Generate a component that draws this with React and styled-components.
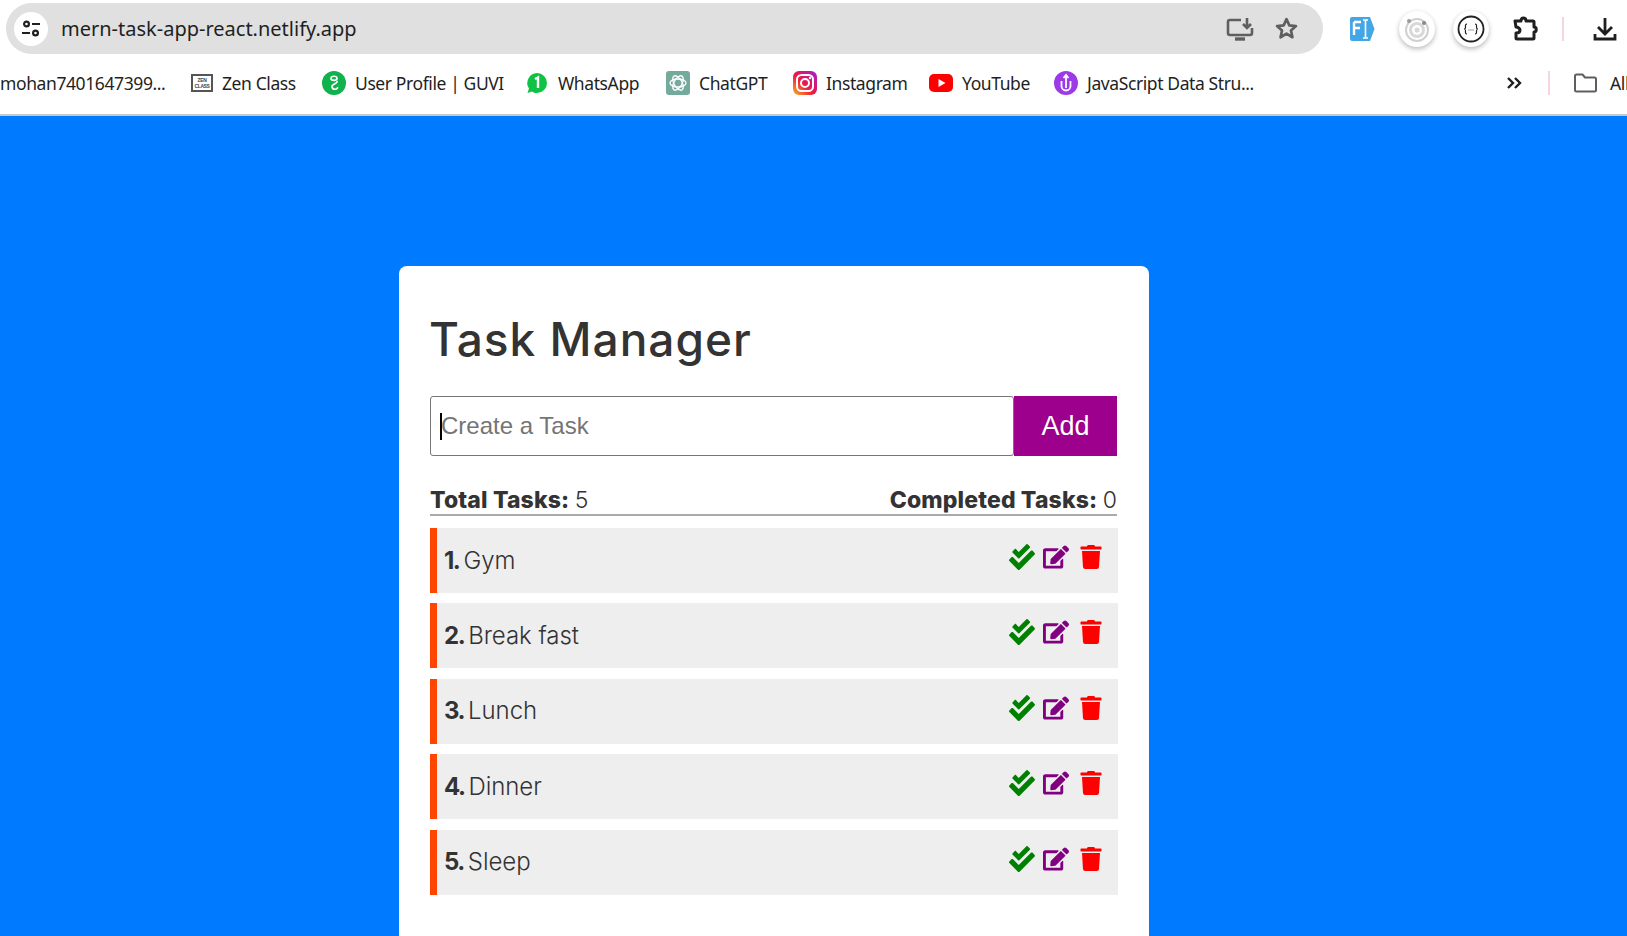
import React from "react";
import styled, { createGlobalStyle } from "styled-components";
import { FaCheckDouble, FaEdit, FaTrash } from "react-icons/fa";

const Global = createGlobalStyle`
  html, body { margin: 0; padding: 0; height: 936px; overflow: hidden; background: #007bff; }
  * { box-sizing: border-box; }
  svg { flex-shrink: 0; }
`;
const Page = styled.div`width: 1627px; height: 936px; overflow: hidden; display: flex; flex-direction: column;`;
const BrowserChrome = styled.header`
  height: 116px; flex: none; background: #fff; border-bottom: 2px solid #c8c8c8;
  display: flex; flex-direction: column; font-family: "Noto Sans", "Open Sans", sans-serif; color: #1f1f1f;
`;
const TopRow = styled.div`height: 57px; padding: 3px 0 0 6px; display: flex; align-items: flex-start;`;
const Omnibox = styled.div`
  width: 1317px; height: 51px; border-radius: 26px; background: #e0e0e0; display: flex; align-items: center;
  padding: 0 24px 0 8px;
`;
const SiteButton = styled.div`width: 34px; height: 34px; border-radius: 50%; background: #fff; display: flex; align-items: center; justify-content: center; flex: none;`;
const Url = styled.span`margin-left: 13px; font-size: 20px; flex: 1;`;
const BoxIcons = styled.div`display: flex; align-items: center; gap: 20px;`;
const Extensions = styled.div`display: flex; align-items: center; margin-left: 26px; height: 51px;`;
const ExtCircle = styled.div`
  width: 36px; height: 36px; border-radius: 50%; background: #fff; box-shadow: 0 2px 5px rgba(0,0,0,.28);
  display: flex; align-items: center; justify-content: center; margin-left: ${p => p.$gap}px;
`;
const ExtPlain = styled.div`display: flex; margin-left: ${p => p.$gap}px; align-items: center;`;
const Separator = styled.div`width: 2px; height: 24px; background: #f6d5e2; margin-left: ${p => p.$gap}px; flex: none;`;
const Bookmarks = styled.nav`height: 57px; display: flex; align-items: center; padding-bottom: 5px; font-size: 17.5px; white-space: nowrap; overflow: hidden;`;
const Bookmark = styled.div`display: flex; align-items: center; gap: 9px; margin-left: ${p => p.$gap}px; letter-spacing: -.4px; flex: none; width: ${p => p.$w}px;`;
const Main = styled.main`flex: 1; background: #007bff; display: flex; padding: 150px 0 0 399px; min-height: 0;`;
const Card = styled.section`
  width: 750px; height: 720px; flex: none; background: #fff; border-radius: 8px; padding: 30px 31px 0;
  font-family: Inter, "Noto Sans", sans-serif; color: #333;
`;
const Title = styled.h1`margin: 13px 0 0 -1px; font-size: 46px; line-height: 60px; font-weight: 500; letter-spacing: 1px;`;
const TaskForm = styled.div`display: flex; margin-top: 27px; width: 687px;`;
const TaskInput = styled.div`
  flex: 1; height: 60px; border: 1px solid #767676; border-radius: 3px; display: flex; align-items: center; padding-left: 9px;
  font-family: "Liberation Sans", Arial, sans-serif; font-size: 24px; color: #757575;
`;
const Caret = styled.span`width: 2px; height: 27px; background: #000; margin-right: -1px; flex: none;`;
const AddButton = styled.button`
  width: 103px; height: 60px; border: 0; background: #9c008c; color: #fff; font: 27px "Liberation Sans", Arial, sans-serif; padding: 0;
`;
const Stats = styled.div`
  display: flex; justify-content: space-between; width: 687px; margin-top: 28px; height: 32px; border-bottom: 2px solid #aaa;
  font-size: 23px; line-height: 32px; color: #333; font-weight: 300; word-spacing: -1px;
`;
const StatLabel = styled.b`font-weight: 800; letter-spacing: .15px; word-spacing: 0;`;
const TaskList = styled.ul`list-style: none; margin: 12px 0 0; padding: 0; width: 688px;`;
const TaskRow = styled.li`
  height: 65px; margin-bottom: 10.4px; background: #eee; border-left: 7px solid #ff4500;
  display: flex; align-items: center; padding: 0 16px 0 7px; font-size: 24px; font-weight: 300;
`;
const TaskName = styled.p`margin: -1px 0 0; flex: 1; letter-spacing: -.05px;`;
const TaskNo = styled.b`font-weight: 700; margin-right: 4px; letter-spacing: -1.5px;`;
const Actions = styled.div`display: flex; align-items: center; margin-top: -7px; font-size: 24px;`;
const Check = styled(FaCheckDouble)`color: #008000; width: 26px; height: 26px;`;
const Edit = styled(FaEdit)`color: #800080; margin-left: 8px; width: 26px; height: 24px;`;
const Trash = styled(FaTrash)`color: #ff0000; margin-left: 11px; width: 22px; height: 24px;`;

const tasks = ["Gym", "Break fast", "Lunch", "Dinner", "Sleep"];

const Tune = () => (
  <svg width="20" height="20" viewBox="0 0 20 20" fill="none" stroke="#1f1f1f" strokeWidth="2.2">
    <circle cx="5.5" cy="5" r="2.4" /><path d="M11 5h8M1 14h8" /><circle cx="14.5" cy="14" r="2.4" />
  </svg>
);
const Install = () => (
  <svg width="28" height="24" viewBox="0 0 28 24" fill="none" stroke="#5f5f5f" strokeWidth="2.6">
    <path d="M15 3H4a2 2 0 0 0-2 2v11a2 2 0 0 0 2 2h20a2 2 0 0 0 2-2v-5" />
    <path d="M21 1v9M17 7l4 4 4-4" /><path d="M9 22h10" strokeWidth="3.4" />
  </svg>
);
const Star = () => (
  <svg width="25" height="25" viewBox="0 0 24 24" fill="none" stroke="#5f5f5f" strokeWidth="2.6" strokeLinejoin="round">
    <path d="M12 3l2.7 6 6.4.7-4.8 4.3 1.4 6.4L12 17l-5.7 3.4 1.4-6.400-4.800-4.300 6.400-.7z" />
  </svg>
);
const FiLogo = () => (
  <svg width="25" height="26" viewBox="0 0 25 26">
    <path d="M2 1h18l4.500 12L20 25H2a2 2 0 0 1-2-2V3a2 2 0 0 1 2-2z" fill="#45a6e5" />
    <path d="M4 6h7M4 6v13M4 12h6" stroke="#fff" strokeWidth="2.400" fill="none" />
    <path d="M13 4h5M15.500 4v18M13 22h5" stroke="#fff" strokeWidth="1.600" fill="none" />
  </svg>
);
const TargetLogo = () => (
  <svg width="30" height="30" viewBox="0 0 30 30" fill="none">
    <circle cx="15" cy="16" r="11" stroke="#d0d0d0" strokeWidth="2" />
    <circle cx="15" cy="16" r="6.500" stroke="#d8d8d8" strokeWidth="3" />
    <circle cx="15" cy="16" r="2.500" fill="#d8d8d8" />
    <circle cx="7" cy="7" r="2" fill="#9a9a9a" /><circle cx="22" cy="9" r="2" fill="#888" />
  </svg>
);
const BracesLogo = () => (
  <svg width="28" height="28" viewBox="0 0 28 28" fill="none">
    <circle cx="14" cy="14" r="12.500" stroke="#222" strokeWidth="1.800" />
    <path d="M10 9c-2 0-1.500 2-1.500 3.500S8 14 7 14c1 0 1.500 0 1.500 1.500S8 19 10 19M18 9c2 0 1.500 2 1.500 3.500S20 14 21 14c-1 0-1.500 0-1.500 1.500S20 19 18 19" stroke="#222" strokeWidth="1.200" />
    <path d="M11.500 15h1M13.500 15h1M15.500 15h1" stroke="#444" />
  </svg>
);
const Puzzle = () => (
  <svg width="26" height="26" viewBox="0 0 26 26" fill="none" stroke="#1f1f1f" strokeWidth="3" strokeLinejoin="round">
    <path d="M3 5h6c0-4 5-4 5 0h7a1 1 0 0 1 1 1v5c3 0 3 5 0 5v6a1 1 0 0 1-1 1H5c-1 0-1-.5-1-1v-5c3 0 4-1.500 4-3s-2-3-4-3z" />
  </svg>
);
const Download = () => (
  <svg width="24" height="24" viewBox="0 0 24 24" fill="none" stroke="#1f1f1f" strokeWidth="2.800">
    <path d="M12 1v15M5 10l7 7 7-7" /><path d="M2 17v5h20v-5" />
  </svg>
);
const ZenIcon = () => (
  <svg width="22" height="18" viewBox="0 0 22 18">
    <rect x="1" y="1" width="20" height="16" fill="#fff" stroke="#555" strokeWidth="2" />
    <text x="11" y="8" fontSize="5" fontWeight="700" textAnchor="middle" fill="#444" fontFamily="Liberation Sans">ZEN</text>
    <text x="11" y="14" fontSize="5" fontWeight="700" textAnchor="middle" fill="#444" fontFamily="Liberation Sans">CLASS</text>
  </svg>
);
const GuviIcon = () => (
  <svg width="24" height="24" viewBox="0 0 24 24">
    <circle cx="12" cy="12" r="12" fill="#0fb24c" />
    <path d="M9 7.500c0-3 6-3 6 0 0 2.500-6 2.500-6 0M15 10c1 3-6 3-5 6 .6 3 6 3 5.500 0" fill="none" stroke="#fff" strokeWidth="1.700" />
  </svg>
);
const WhatsIcon = () => (
  <svg width="24" height="24" viewBox="0 0 24 24">
    <path d="M12 2a10 10 0 0 1 0 20c-2 0-3.500-.5-5-1.500L2.500 22 4 17.500A10 10 0 0 1 12 2z" fill="#0ec243" />
    <path d="M10 8l3-1.500V17" stroke="#fff" strokeWidth="2.400" fill="none" />
  </svg>
);
const ChatIcon = () => (
  <svg width="24" height="24" viewBox="0 0 24 24">
    <rect width="24" height="24" rx="3" fill="#74aa9c" />
    <g fill="none" stroke="#fff" strokeWidth="1.300">
      <ellipse cx="12" cy="12" rx="8" ry="4" />
      <ellipse cx="12" cy="12" rx="8" ry="4" transform="rotate(60 12 12)" />
      <ellipse cx="12" cy="12" rx="8" ry="4" transform="rotate(120 12 12)" />
    </g>
  </svg>
);
const InstaIcon = () => (
  <svg width="24" height="24" viewBox="0 0 24 24" fill="none">
    <defs><linearGradient id="ig" x1="0" y1="1" x2="1" y2="0"><stop offset="0" stopColor="#fdb322" /><stop offset=".45" stopColor="#f0183c" /><stop offset="1" stopColor="#a01ed8" /></linearGradient></defs>
    <rect width="24" height="24" rx="6" fill="url(#ig)" />
    <rect x="4" y="4" width="16" height="16" rx="4.500" stroke="#fff" strokeWidth="2" />
    <circle cx="12" cy="12" r="4" stroke="#fff" strokeWidth="2" /><circle cx="17" cy="7" r="1.200" fill="#fff" />
  </svg>
);
const YouTubeIcon = () => (
  <svg width="24" height="18" viewBox="0 0 24 18">
    <rect width="24" height="18" rx="5" fill="#f00" /><path d="M9.500 5l7 4-7 4z" fill="#fff" />
  </svg>
);
const JsIcon = () => (
  <svg width="24" height="24" viewBox="0 0 24 24" fill="none">
    <circle cx="12" cy="12" r="12" fill="#9c3ae8" />
    <path d="M7.500 10v5a4.500 4.500 0 0 0 9 0v-5" stroke="#fff" strokeWidth="1.800" /><path d="M12 5v12M9.500 7l2.500-3 2.500 3" stroke="#fff" strokeWidth="1.800" />
  </svg>
);
const Chevrons = () => (
  <svg width="16" height="14" viewBox="0 0 16 14" fill="none" stroke="#1f1f1f" strokeWidth="2.400">
    <path d="M2 2l5 5-5 5M9 2l5 5-5 5" />
  </svg>
);
const Folder = () => (
  <svg width="25" height="20" viewBox="0 0 25 20" fill="none" stroke="#5f5f5f" strokeWidth="2" strokeLinejoin="round">
    <path d="M2 3a1.500 1.500 0 0 1 1.500-1.500h6l2.500 3h9.500A1.500 1.500 0 0 1 23 6v11a1.500 1.500 0 0 1-1.500 1.500h-18A1.500 1.500 0 0 1 2 17z" />
  </svg>
);

const marks = [
  { label: "Zen Class", Icon: ZenIcon, w: 131 },
  { label: "User Profile | GUVI", Icon: GuviIcon, w: 203 },
  { label: "WhatsApp", Icon: WhatsIcon, w: 141 },
  { label: "ChatGPT", Icon: ChatIcon, w: 127 },
  { label: "Instagram", Icon: InstaIcon, w: 136 },
  { label: "YouTube", Icon: YouTubeIcon, w: 125 },
  { label: "JavaScript Data Stru...", Icon: JsIcon, w: 223 },
];

export default function App() {
  return (
    <Page>
      <Global />
      <BrowserChrome>
        <TopRow>
          <Omnibox>
            <SiteButton><Tune /></SiteButton>
            <Url>mern-task-app-react.netlify.app</Url>
            <BoxIcons><Install /><Star /></BoxIcons>
          </Omnibox>
          <Extensions>
            <ExtPlain $gap={1}><FiLogo /></ExtPlain>
            <ExtCircle $gap={24}><TargetLogo /></ExtCircle>
            <ExtCircle $gap={18}><BracesLogo /></ExtCircle>
            <ExtPlain $gap={23}><Puzzle /></ExtPlain>
            <Separator $gap={24} />
            <ExtPlain $gap={29}><Download /></ExtPlain>
          </Extensions>
        </TopRow>
        <Bookmarks>
          <Bookmark $w={191} $gap={0}>mohan7401647399...</Bookmark>
          {marks.map(({ label, Icon, w }) => (
            <Bookmark key={label} $gap={0} $w={w}><Icon />{label}</Bookmark>
          ))}
          <ExtPlain $gap={229}><Chevrons /></ExtPlain>
          <Separator $gap={26} />
          <ExtPlain $gap={23}><Folder /></ExtPlain>
          <Bookmark $gap={12} $w={30}>All</Bookmark>
        </Bookmarks>
      </BrowserChrome>
      <Main>
        <Card>
          <Title>Task Manager</Title>
          <TaskForm>
            <TaskInput><Caret />Create a Task</TaskInput>
            <AddButton>Add</AddButton>
          </TaskForm>
          <Stats>
            <span><StatLabel>Total Tasks:</StatLabel> 5</span>
            <span><StatLabel>Completed Tasks:</StatLabel> 0</span>
          </Stats>
          <TaskList>
            {tasks.map((t, i) => (
              <TaskRow key={t}>
                <TaskName><TaskNo>{i + 1}.</TaskNo>{t}</TaskName>
                <Actions><Check /><Edit /><Trash /></Actions>
              </TaskRow>
            ))}
          </TaskList>
        </Card>
      </Main>
    </Page>
  );
}
